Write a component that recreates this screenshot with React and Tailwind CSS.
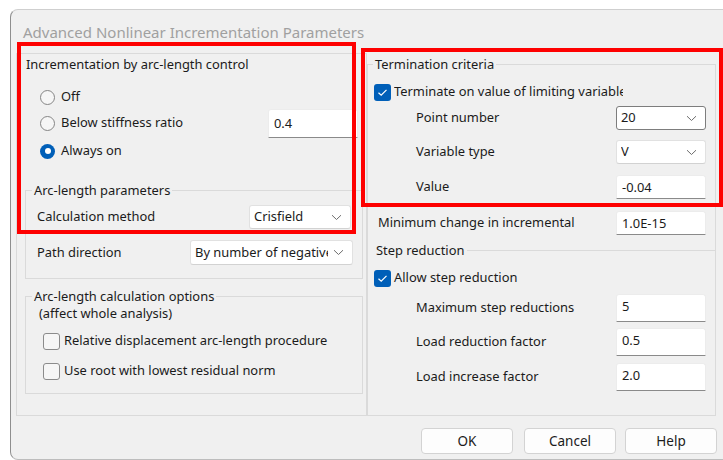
import React from 'react';

// ---- small Win11-style controls ----
function Radio({ checked }) {
  if (checked) {
    return (
      <span className="flex h-[15px] w-[15px] shrink-0 items-center justify-center rounded-full bg-[#005fb8]">
        <span className="h-[6px] w-[6px] rounded-full bg-white" />
      </span>
    );
  }
  return <span className="h-[15px] w-[15px] shrink-0 rounded-full border border-[#858585] bg-[#f6f6f6]" />;
}

function Check({ checked }) {
  if (checked) {
    return (
      <span className="flex h-[17px] w-[17px] shrink-0 items-center justify-center rounded-[3px] bg-[#005fb8]">
        <svg width="11" height="9" viewBox="0 0 11 9">
          <polyline points="1.5,4.8 4.2,7.2 9.5,1.8" fill="none" stroke="white" strokeWidth="1.2" />
        </svg>
      </span>
    );
  }
  return <span className="h-[17px] w-[17px] shrink-0 rounded-[3px] border border-[#8b8b8b] bg-[#f6f6f6]" />;
}

function Chevron() {
  return (
    <svg width="11" height="7" viewBox="0 0 11 7" className="shrink-0">
      <polyline points="1,1.2 5.5,5.5 10,1.2" fill="none" stroke="#6c6c6c" strokeWidth="1" />
    </svg>
  );
}

function Select({ value, focused, className }) {
  return (
    <div
      className={
        'flex h-[24px] items-center overflow-hidden rounded-[3px] bg-white pl-[4px] pr-[8px] ' +
        (focused ? 'border border-[#7d7d7d] ' : 'border border-[#e1e1e1] border-b-[#d2d2d2] ') +
        className
      }
    >
      <span className="mr-[5px] flex-1 overflow-hidden whitespace-nowrap">{value}</span>
      <Chevron />
    </div>
  );
}

function Field({ value, className }) {
  return (
    <div
      className={
        'rounded-t-[3px] border border-[#ececec] border-b-[#8a8a8a] bg-white pl-[5px] pt-[2px] leading-[18px] ' +
        className
      }
    >
      {value}
    </div>
  );
}

function Row({ label, children, className }) {
  return (
    <div className={'flex items-center ' + className}>
      <span className="flex-1 whitespace-nowrap">{label}</span>
      {children}
    </div>
  );
}

export default function App() {
  return (
    <div className="relative h-[460px] w-[723px] overflow-hidden bg-white font-['Noto_Sans',sans-serif] text-[12.9px] text-[#1b1b1b]">
      <div className="ml-[10px] mt-[9px] h-[451px] w-[720px] rounded-l-[8px] border-b border-l border-t border-b-[#bdbdbd] border-l-[#8e8e8e] border-t-[#cfcfcf] bg-[#f0f0f0]">
        {/* title bar, window inactive */}
        <div className="pl-[12px] pt-[12px] text-[15px] leading-[20px] text-[#a0a0a0]">
          Advanced Nonlinear Incrementation Parameters
        </div>

        <div className="mt-[11px] flex items-start pl-[5px]">
          {/* left column */}
          <div className="h-[363px] w-[351px] border border-[#dadada]">
            <div className="pl-[9px] leading-[20px]">Incrementation by arc-length control</div>

            <div className="mt-[10px]">
              <div className="flex h-[26px] items-center pl-[23px]">
                <Radio />
                <span className="ml-[6px]">Off</span>
              </div>
              <div className="flex h-[26px] items-center pl-[23px]">
                <Radio />
                <span className="ml-[6px] flex-1">Below stiffness ratio</span>
                <Field value="0.4" className="mr-[8px] h-[29px] w-[90px] pt-[4px]" />
              </div>
              <div className="mt-[2px] flex h-[26px] items-center pl-[23px]">
                <Radio checked />
                <span className="ml-[6px]">Always on</span>
              </div>
            </div>

            <fieldset className="ml-[8px] mr-[3px] mt-[17px] border border-[#dadada]">
              <legend className="ml-[6px] px-[2px] leading-[18px]">Arc-length parameters</legend>
              <div className="pb-[13px] pl-[11px]">
                <Row label="Calculation method" className="mt-[6px] h-[24px]">
                  <Select value="Crisfield" className="mr-[11px] w-[102px]" />
                </Row>
                <Row label="Path direction" className="mt-[11px] h-[25px]">
                  <Select value="By number of negative pivots" className="mr-[9px] h-[25px] w-[163px]" />
                </Row>
              </div>
            </fieldset>

            <fieldset className="ml-[8px] mr-[3px] mt-[8px] border border-[#dadada]">
              <legend className="ml-[6px] px-[2px] leading-[18px]">Arc-length calculation options</legend>
              <div className="pb-[11px]">
                <div className="pl-[13px] leading-[16px]">(affect whole analysis)</div>
                <div className="mt-[9px] flex h-[22px] items-center pl-[17px]">
                  <Check />
                  <span className="ml-[4px]">Relative displacement arc-length procedure</span>
                </div>
                <div className="mt-[8px] flex h-[22px] items-center pl-[17px]">
                  <Check />
                  <span className="ml-[4px]">Use root with lowest residual norm</span>
                </div>
              </div>
            </fieldset>
          </div>

          {/* right column */}
          <fieldset className="mt-[2px] h-[361px] w-[349px] border border-[#dadada]">
            <legend className="ml-[5px] px-[2px] leading-[18px]">Termination criteria</legend>

            <div className="mt-[8px] flex h-[22px] items-center pl-[6px]">
              <Check checked />
              <span className="ml-[3px] w-[229px] overflow-hidden whitespace-nowrap">
                Terminate on value of limiting variable
              </span>
            </div>
            <Row label="Point number" className="mt-[3px] h-[24px] pl-[48px]">
              <Select value="20" focused className="mr-[9px] w-[90px]" />
            </Row>
            <Row label="Variable type" className="mt-[10px] h-[24px] pl-[48px]">
              <Select value="V" className="mr-[9px] w-[90px]" />
            </Row>
            <Row label="Value" className="mt-[11px] h-[24px] pl-[48px]">
              <Field value="-0.04" className="mr-[9px] h-[24px] w-[90px]" />
            </Row>
            <Row label="Minimum change in incremental" className="mt-[12px] h-[24px] pl-[10px]">
              <Field value="1.0E-15" className="mr-[9px] h-[24px] w-[90px]" />
            </Row>

            <div className="mt-[6px] flex h-[18px] items-center pl-[8px]">
              <span className="pr-[3px] leading-[18px]">Step reduction</span>
              <span className="h-px flex-1 bg-[#dadada]" />
            </div>
            <div className="mt-[8px] flex h-[22px] items-center pl-[6px]">
              <Check checked />
              <span className="ml-[3px]">Allow step reduction</span>
            </div>
            <Row label="Maximum step reductions" className="mt-[5px] h-[28px] pl-[48px]">
              <Field value="5" className="mr-[9px] h-[28px] w-[90px]" />
            </Row>
            <Row label="Load reduction factor" className="mt-[6px] h-[28px] pl-[48px]">
              <Field value="0.5" className="mr-[9px] h-[28px] w-[90px]" />
            </Row>
            <Row label="Load increase factor" className="mt-[7px] h-[28px] pl-[48px]">
              <Field value="2.0" className="mr-[9px] h-[28px] w-[90px]" />
            </Row>
          </fieldset>
        </div>

        {/* dialog buttons */}
        <div className="mt-[12px] flex pl-[410px] text-[13.5px]">
          <button className="h-[26px] w-[92px] rounded-[4px] border border-[#d3d3d3] bg-[#fdfdfd]">OK</button>
          <button className="ml-[11px] h-[26px] w-[92px] rounded-[4px] border border-[#d3d3d3] bg-[#fdfdfd]">
            Cancel
          </button>
          <button className="ml-[9px] h-[26px] w-[92px] rounded-[4px] border border-[#d3d3d3] bg-[#fdfdfd]">
            Help
          </button>
        </div>
      </div>

      {/* red annotation frames drawn over the dialog */}
      <div className="absolute left-[17px] top-[42px] h-[192px] w-[339px] border-4 border-[#fe0000]" />
      <div className="absolute left-[361px] top-[48px] h-[159px] w-[362px] border-4 border-[#fe0000]" />
    </div>
  );
}
